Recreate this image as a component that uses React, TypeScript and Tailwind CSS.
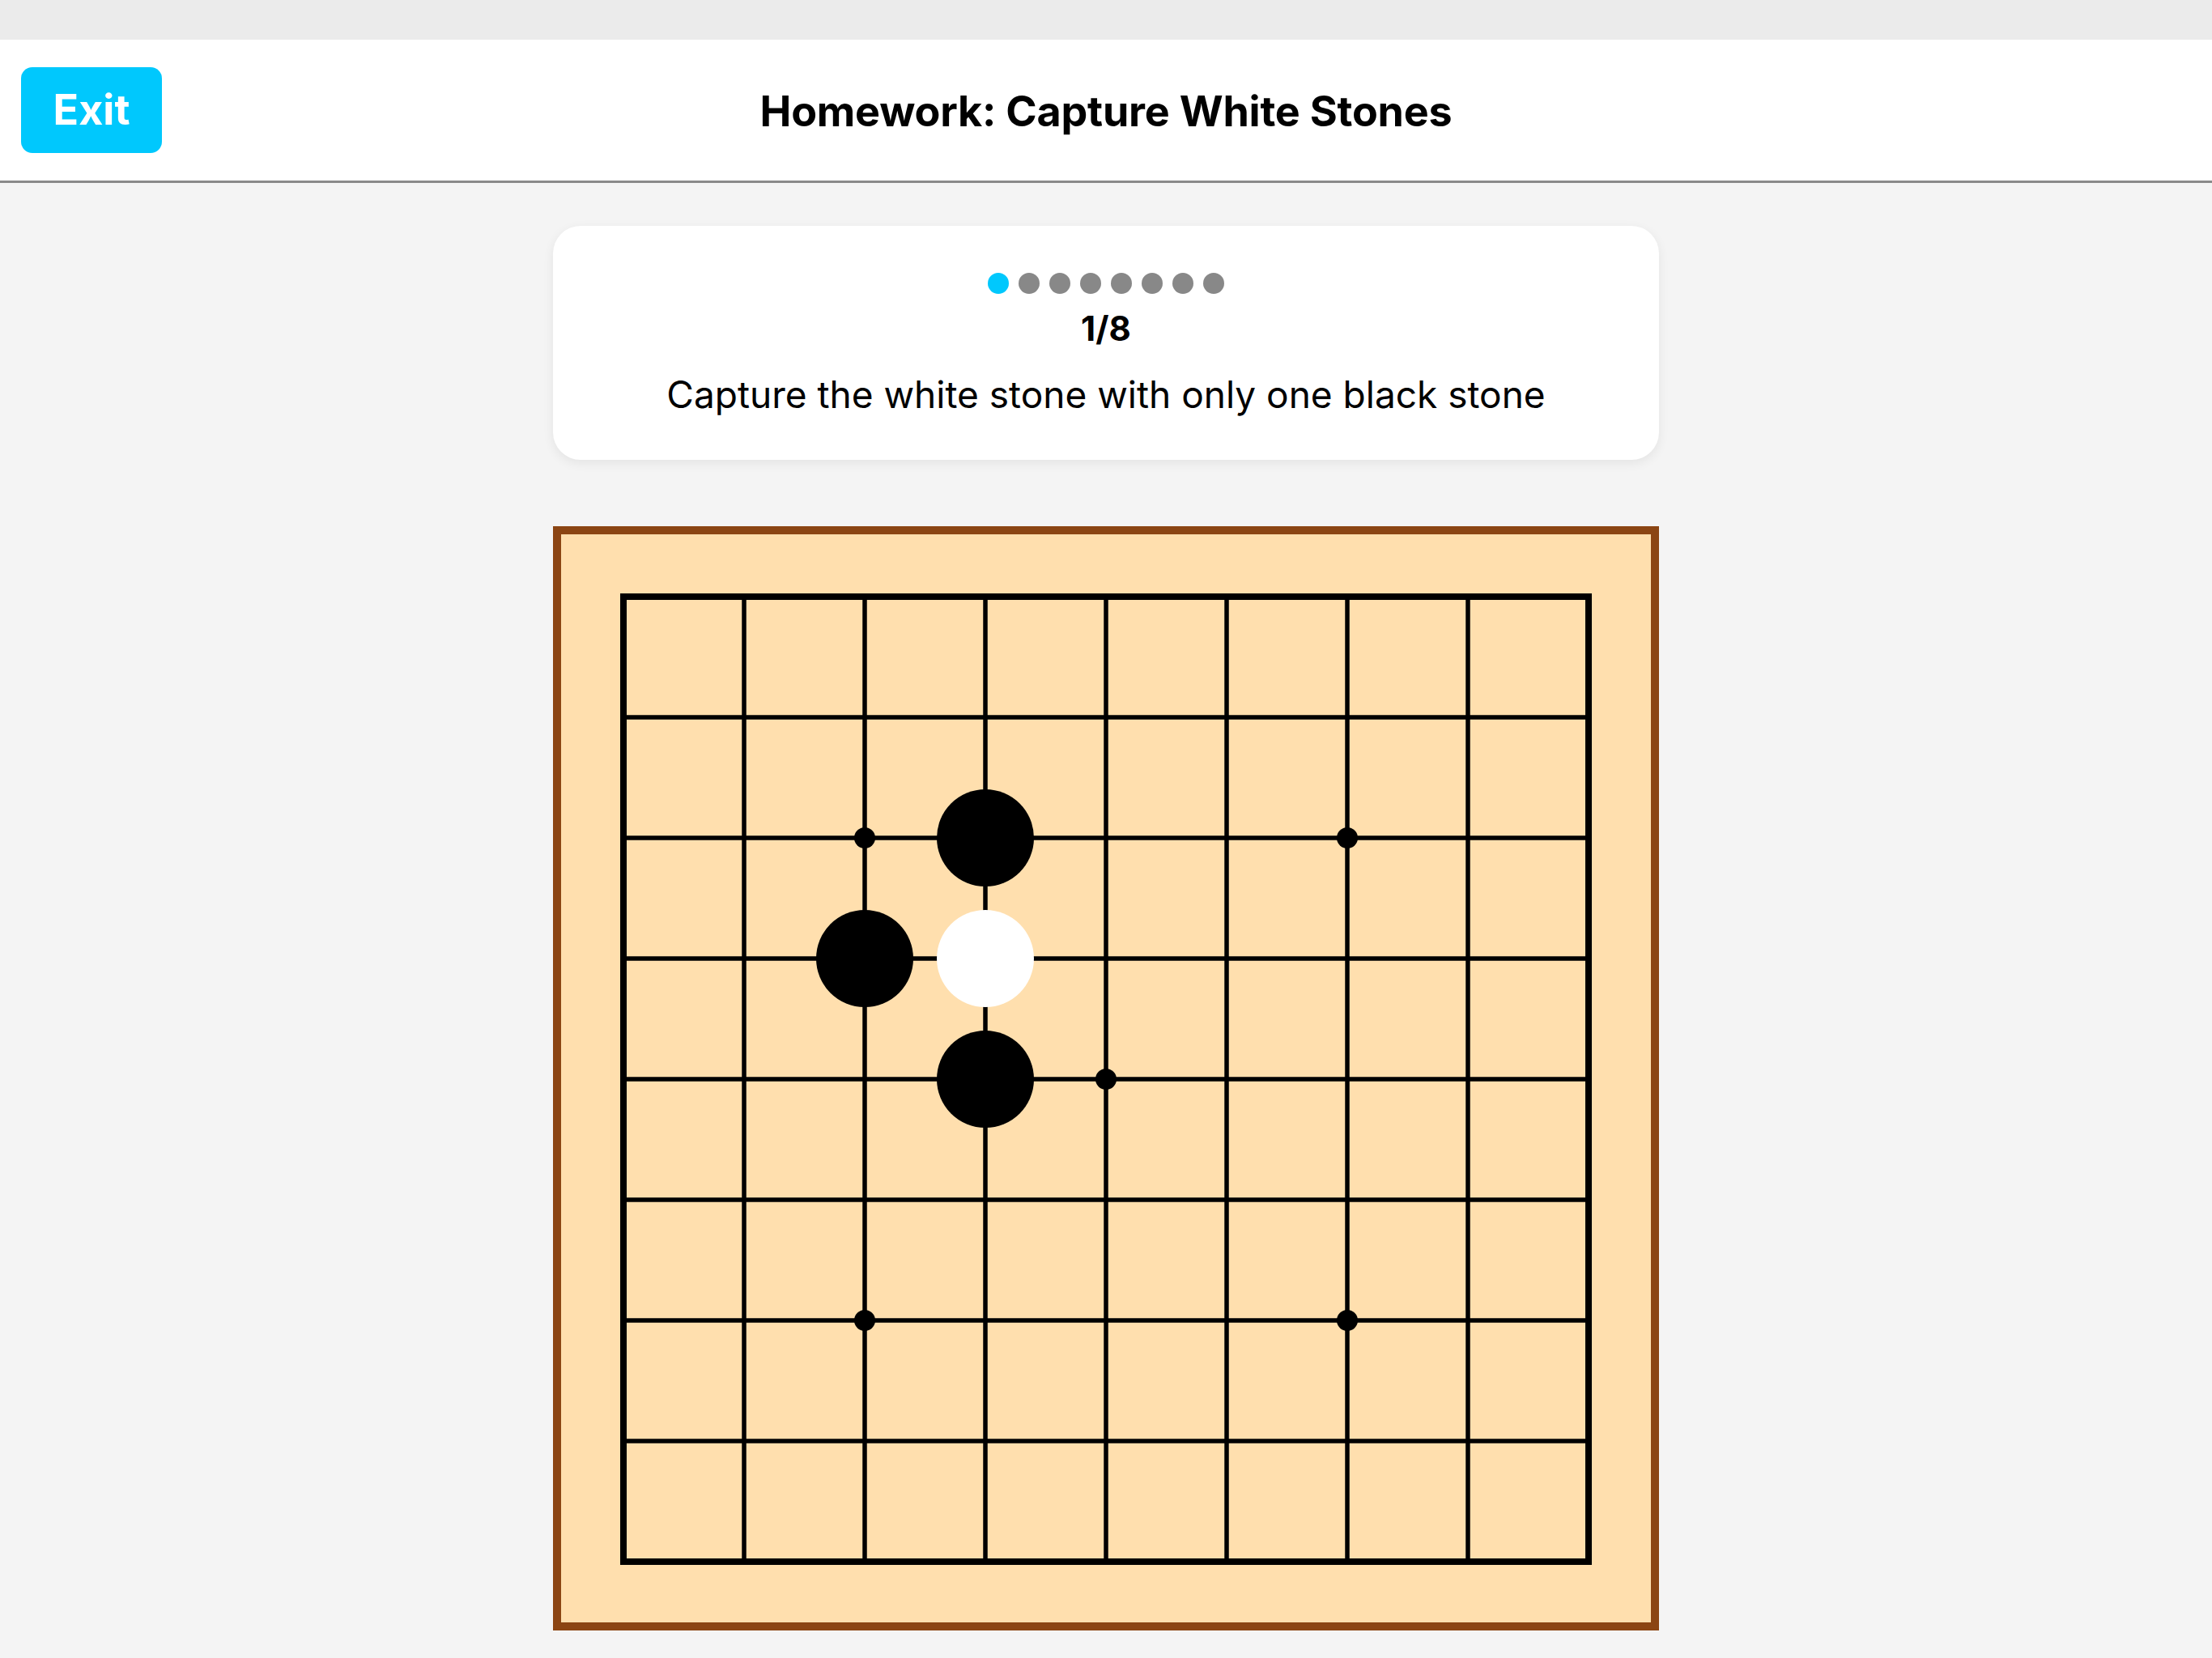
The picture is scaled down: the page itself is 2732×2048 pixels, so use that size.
import React from 'react';

type Stone = { x: number; y: number; color: 'black' | 'white' };

const SIZE = 9;
const CELL = 149;
const MARGIN = 77;

const stars = [
  [2, 2],
  [6, 2],
  [4, 4],
  [2, 6],
  [6, 6],
];

const stones: Stone[] = [
  { x: 3, y: 2, color: 'black' },
  { x: 2, y: 3, color: 'black' },
  { x: 3, y: 3, color: 'white' },
  { x: 3, y: 4, color: 'black' },
];

const Board: React.FC = () => {
  const inner = CELL * (SIZE - 1) + MARGIN * 2;
  const pos = (i: number) => MARGIN + i * CELL;
  const lines = Array.from({ length: SIZE }, (_, i) => i);

  return (
    <div className="w-[1366px] h-[1364px] border-[10px] border-[#8b4513] bg-[#ffdfae]">
      <svg width={inner} height={inner} viewBox={`0 0 ${inner} ${inner}`} className="block">
        {lines.map((i) => (
          <g key={i}>
            <line x1={pos(0)} y1={pos(i)} x2={pos(SIZE - 1)} y2={pos(i)} stroke="#000" strokeWidth={5.5} />
            <line x1={pos(i)} y1={pos(0)} x2={pos(i)} y2={pos(SIZE - 1)} stroke="#000" strokeWidth={5.5} />
          </g>
        ))}
        {/* thick outer frame */}
        <rect
          x={pos(0)}
          y={pos(0)}
          width={CELL * (SIZE - 1)}
          height={CELL * (SIZE - 1)}
          fill="none"
          stroke="#000"
          strokeWidth={8}
        />
        {stars.map(([x, y]) => (
          <circle key={`${x}-${y}`} cx={pos(x)} cy={pos(y)} r={13} fill="#000" />
        ))}
        {stones.map((s) => (
          <circle key={`${s.x}-${s.y}`} cx={pos(s.x)} cy={pos(s.y)} r={60} fill={s.color === 'black' ? '#000' : '#fff'} />
        ))}
      </svg>
    </div>
  );
};

const App: React.FC = () => {
  const total = 8;
  const current = 1;

  return (
    <div className="min-h-screen w-full bg-[#f4f4f4] font-['Inter','Liberation_Sans',sans-serif] text-black">
      {/* status bar */}
      <div className="h-[49px] bg-[#ebebeb]" />

      {/* header */}
      <div className="h-[177px] bg-white border-b-[3px] border-[#8a8a8a] grid grid-cols-[1fr_auto_1fr] items-center">
        <div className="pl-[26px]">
          <button className="w-[174px] h-[106px] rounded-[14px] bg-[#00c8fd] text-white text-[52px] font-bold flex items-center justify-center">
            Exit
          </button>
        </div>
        <h1 className="text-[52px] font-bold tracking-[-0.2px] pt-[4px]">Homework: Capture White Stones</h1>
        <div />
      </div>

      <div className="flex flex-col items-center pt-[53px] gap-[82px]">
        {/* progress card */}
        <div className="w-[1366px] h-[289px] bg-white rounded-[34px] shadow-[0_4px_14px_rgba(0,0,0,0.07)] flex flex-col items-center pt-[58px]">
          <div className="flex gap-[12px]">
            {Array.from({ length: total }, (_, i) => (
              <div
                key={i}
                className={`w-[26px] h-[26px] rounded-full ${i === current - 1 ? 'bg-[#00c8fd]' : 'bg-[#888888]'}`}
              />
            ))}
          </div>
          <div className="mt-[18px] text-[42px] font-bold leading-[50px]">
            {current}/{total}
          </div>
          <div className="mt-[28px] text-[46px] leading-[56px]">Capture the white stone with only one black stone</div>
        </div>

        <Board />
      </div>
    </div>
  );
};

export default App;
